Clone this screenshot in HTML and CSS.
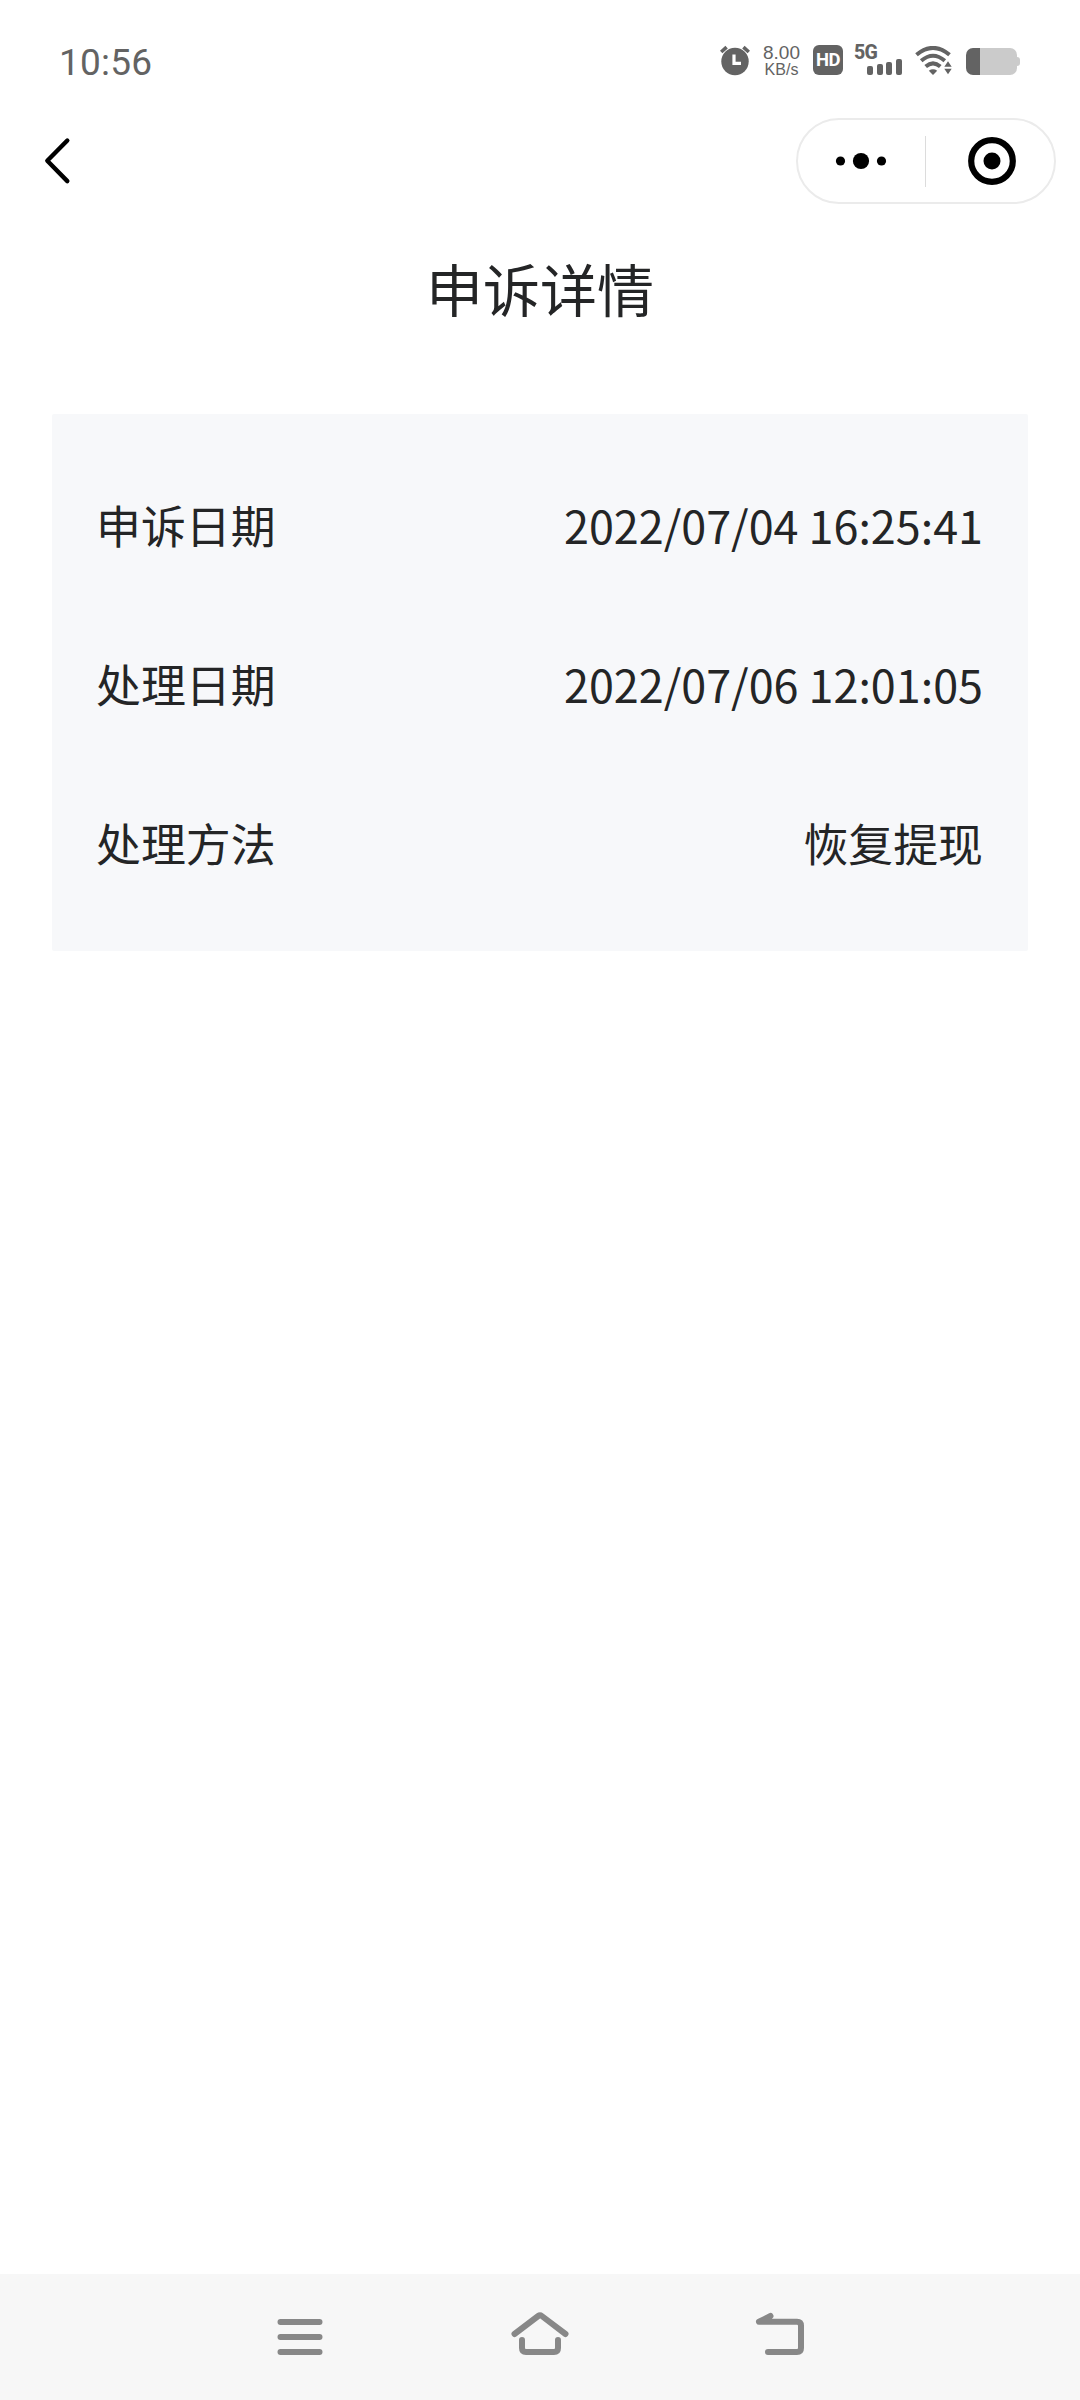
FILE: index.html
```html
<!DOCTYPE html>
<html lang="zh-CN">
<head>
  <meta charset="UTF-8">
  <title>申诉详情</title>
  <link rel="stylesheet" href="styles.css">
</head>
<body>

<!-- 状态栏 -->
<div class="status-bar">
  <span class="time">10:56</span>
  <div class="status-icons">
    <svg class="alarm" width="32" height="32" viewBox="0 0 32 32">
      <circle cx="16" cy="17.5" r="13.7" fill="#636363"/>
      <path d="M2.2 8L7.6 3.2M24.4 3.2L29.8 8" stroke="#636363" stroke-width="3.6" fill="none"/>
      <path d="M15 10.5V19.3H22" stroke="#fff" stroke-width="3.2" fill="none"/>
    </svg>
    <div class="speed">
      <span class="speed-num">8.00</span>
      <span class="speed-unit">KB/s</span>
    </div>
    <div class="hd">HD</div>
    <div class="signal">
      <span class="signal-type">5G</span>
      <div class="bars">
        <i class="bar bar1"></i>
        <i class="bar bar2"></i>
        <i class="bar bar3"></i>
        <i class="bar bar4"></i>
      </div>
    </div>
    <svg class="wifi" width="38" height="30" viewBox="0 0 38 30">
      <g fill="none" stroke="#636363" stroke-width="4">
        <path d="M1.5 8.8Q18 -5 34.5 8.8"/>
        <path d="M6.2 14.8Q18 4.7 29.8 14.8"/>
        <path d="M10.7 20.5Q18 14.3 25.3 20.5"/>
      </g>
      <path d="M13.8 24.7Q18 21.8 22.2 24.7L18 29Z" fill="#636363"/>
      <path d="M29.3 20.7L33 15.3L36.7 20.7ZM29.3 22.8L33 28.3L36.7 22.8Z" fill="#636363"/>
    </svg>
    <div class="battery"></div>
  </div>
</div>

<!-- 导航栏 -->
<div class="nav-bar">
  <svg class="back" width="32" height="52" viewBox="0 0 32 52">
    <path d="M25.3 5.5L5.3 25.8L25.3 46.1" fill="none" stroke="#000" stroke-width="4.4" stroke-linecap="round" stroke-linejoin="round"/>
  </svg>
  <div class="capsule">
    <div class="capsule-btn">
      <svg width="52" height="18" viewBox="0 0 52 18">
        <circle cx="5.5" cy="9" r="4.6"/>
        <circle cx="26" cy="9" r="8.1"/>
        <circle cx="46.5" cy="9" r="4.6"/>
      </svg>
    </div>
    <div class="divider"></div>
    <div class="capsule-btn close-btn">
      <svg width="50" height="50" viewBox="0 0 50 50">
        <circle cx="25" cy="25" r="20.8" fill="none" stroke="#000" stroke-width="6.2"/>
        <circle cx="25" cy="25" r="8.5"/>
      </svg>
    </div>
  </div>
</div>

<h1>申诉详情</h1>

<div class="card">
  <div class="row">
    <span>申诉日期</span>
    <span>2022/07/04 16:25:41</span>
  </div>
  <div class="row">
    <span>处理日期</span>
    <span>2022/07/06 12:01:05</span>
  </div>
  <div class="row">
    <span>处理方法</span>
    <span>恢复提现</span>
  </div>
</div>

<!-- 系统按键 -->
<div class="system-bar">
  <svg width="60" height="60" viewBox="0 0 60 60">
    <path d="M10.5 15H49.5M10.5 30H49.5M10.5 45H49.5"/>
  </svg>
  <svg width="60" height="60" viewBox="0 0 60 60">
    <path d="M4.5 27L28.2 9Q30 7.6 31.8 9L55.5 27"/>
    <path d="M12 33V41Q12 45 16 45H44Q48 45 48 41V33"/>
  </svg>
  <svg width="60" height="60" viewBox="0 0 60 60">
    <path d="M20.5 9L9 14.8H47Q51 14.8 51 18.8V41Q51 45 47 45H18"/>
  </svg>
</div>

</body>
</html>
```
FILE: styles.css
```css
body {
  width: 1080px;
  height: 2400px;
  margin: 0;
  background: #fff;
  color: #242526;
  font-family: 'Noto Sans CJK SC', sans-serif;
  display: flex;
  flex-direction: column;
  overflow: hidden;
}

/* 状态栏 */
.status-bar {
  height: 104px;
  padding: 0 60px 0 59px;
  box-sizing: border-box;
  display: flex;
  justify-content: space-between;
  color: #636363;
  font-family: Roboto, sans-serif;
}
.time {
  padding-top: 41px;
  font-size: 37px;
  line-height: 43px;
  letter-spacing: 0.2px;
}
.status-icons {
  display: flex;
  align-items: flex-start;
  padding-top: 45px;
}
.alarm {
  margin: -1px 12px 0 0;
}
.speed {
  width: 37px;
  display: flex;
  flex-direction: column;
  align-items: center;
  font-family: 'Liberation Sans', sans-serif;
}
.speed-num {
  font-size: 19px;
  line-height: 15px;
}
.speed-unit {
  margin-top: 4px;
  font-size: 16px;
  line-height: 12px;
}
.hd {
  width: 30px;
  height: 30px;
  margin-left: 13px;
  border-radius: 6px;
  background: #636363;
  color: #fff;
  font-size: 18.5px;
  font-weight: 700;
  line-height: 31px;
  letter-spacing: -0.5px;
  text-align: center;
}
.signal {
  width: 48px;
  height: 30px;
  margin-left: 11px;
  display: flex;
  flex-direction: column;
  position: relative;
}
.signal-type {
  font-size: 19.5px;
  font-weight: 800;
  line-height: 15px;
  letter-spacing: -0.8px;
}
.bars {
  position: absolute;
  left: 13px;
  bottom: 0;
  display: flex;
  align-items: flex-end;
  gap: 3.7px;
}
.bar {
  width: 6px;
  border-radius: 2px;
  background: #636363;
}
.bar1 {
  height: 9px;
}
.bar2 {
  height: 11px;
}
.bar3 {
  height: 13.5px;
}
.bar4 {
  height: 16.5px;
}
.wifi {
  margin: 1px 0 0 13px;
}
.battery {
  width: 51px;
  height: 27px;
  margin: 3px 3px 0 13px;
  border-radius: 7px;
  background: linear-gradient(to right, #636363 14px, #cbcbcb 14px);
  position: relative;
}
.battery::after {
  content: "";
  position: absolute;
  right: -3px;
  top: 9px;
  width: 3px;
  height: 9px;
  border-radius: 0 3px 3px 0;
  background: #cbcbcb;
}

/* 导航栏 */
.nav-bar {
  height: 114px;
  padding: 0 24px 0 42px;
  display: flex;
  align-items: center;
  justify-content: space-between;
}
.capsule {
  width: 260px;
  height: 86px;
  box-sizing: border-box;
  border: 2px solid #ebebeb;
  border-radius: 43px;
  display: flex;
  align-items: center;
}
.capsule-btn {
  flex: 1;
  display: flex;
  align-items: center;
  justify-content: center;
}
.capsule-btn:first-child {
  padding-left: 1px;
}
.capsule-btn svg {
  display: block;
}
.close-btn {
  padding-left: 5px;
}
.divider {
  width: 1px;
  height: 51px;
  margin-left: 2px;
  background: #dcdcdc;
}

h1 {
  margin: 27px 0 0;
  font-size: 57px;
  font-weight: 400;
  line-height: 84px;
  text-align: center;
}

/* 申诉信息 */
.card {
  margin: 85px 52px 0;
  padding: 31px 45px 29px 44px;
  border-radius: 2px;
  background: #f7f8fa;
}
.row {
  height: 159px;
  display: flex;
  align-items: center;
  justify-content: space-between;
  font-size: 44.9px;
  line-height: 66px;
}

/* 系统按键 */
.system-bar {
  height: 126px;
  margin-top: auto;
  padding: 0 270px;
  background: #f7f7f7;
  display: flex;
  align-items: center;
  justify-content: space-between;
}
.system-bar svg {
  fill: none;
  stroke: #888;
  stroke-width: 6;
  stroke-linecap: round;
  stroke-linejoin: round;
}
```
